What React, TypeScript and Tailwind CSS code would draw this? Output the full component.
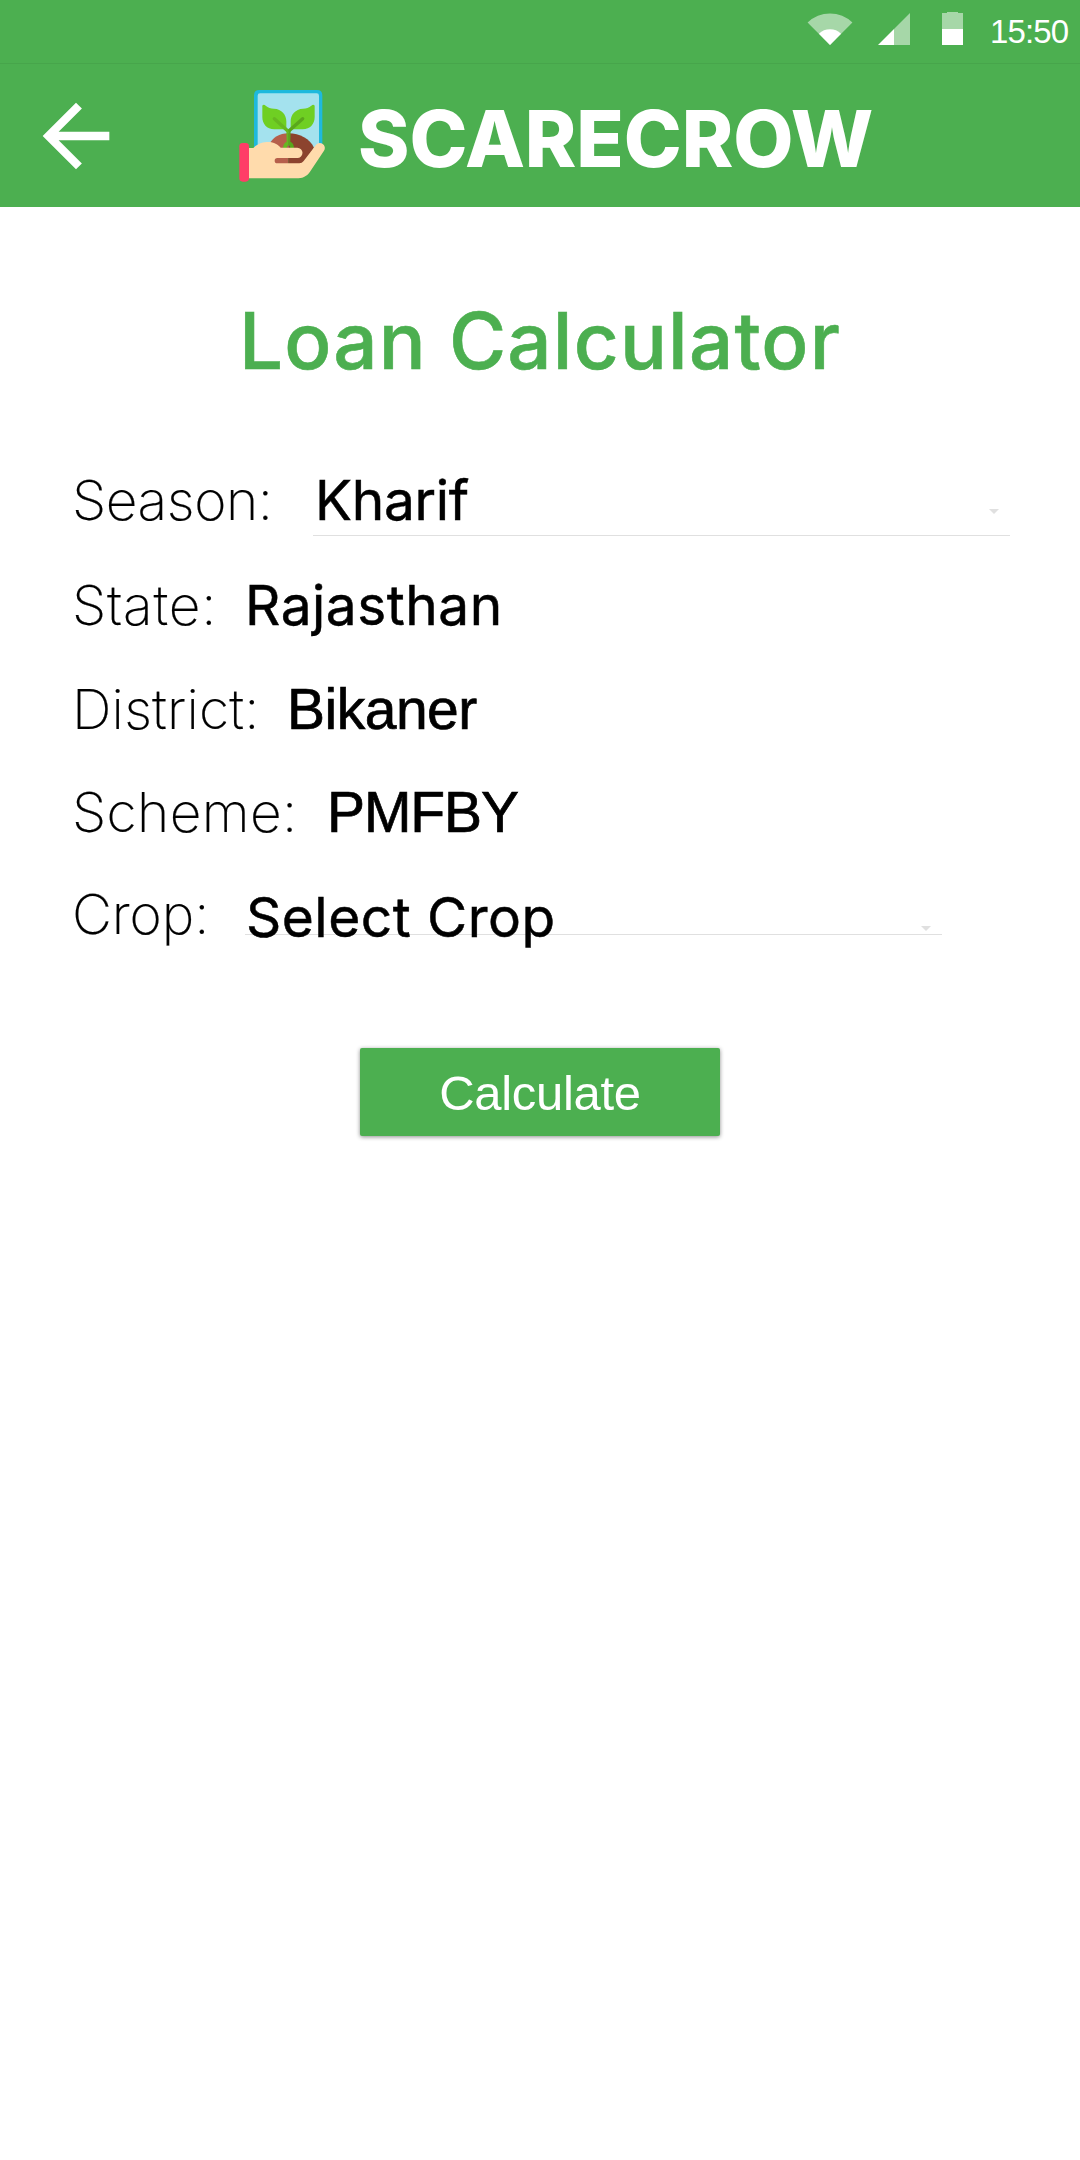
import React from "react";

const INTER = "font-['Inter',sans-serif]";
const LIBERATION = "font-['Liberation_Sans',sans-serif]";

function StatusBar() {
  return (
    <div className="flex h-16 items-start border-b border-[#47a54b] bg-[#4caf50]">
      <svg className="mt-3 ml-[807px] h-[33px] w-[46px]" viewBox="0 0 46 33">
        <path d="M23 33 0.6 10.6A32 32 0 0 1 45.4 10.6Z" fill="#fff" fillOpacity=".5" />
        <path d="M23 33 11.9 21.7A16 16 0 0 1 34.1 21.7Z" fill="#fff" />
      </svg>
      <svg className="mt-[13px] ml-[25px] h-8 w-8" viewBox="0 0 32 32">
        <path d="M16 16 32 0V32H16Z" fill="#fff" fillOpacity=".5" />
        <path d="M0 32 16 16V32Z" fill="#fff" />
      </svg>
      <svg className="mt-3 ml-8 h-[33px] w-[21px]" viewBox="0 0 21 33">
        <path d="M5 0H16V1H21V17H0V1H5Z" fill="#fff" fillOpacity=".5" />
        <path d="M0 17H21V33H0Z" fill="#fff" />
      </svg>
      <span className={`${LIBERATION} mt-3 ml-[27px] text-[33px] leading-[40px] tracking-[-0.9px] whitespace-nowrap text-white`}>15:50</span>
    </div>
  );
}

function Logo() {
  return (
    <svg className="mt-[25px] ml-[112px] h-[94px] w-[88px]" viewBox="714 118 264 282">
      <path d="M762 310V137Q762 121 778 121H951Q967 121 967 137V300H762Z" fill="#1eb9dd" />
      <path d="M773 310V138Q773 131 780 131H950Q957 131 957 138V300H773Z" fill="#a4e2ee" />
      <path d="M865 251C838 251 818 264 808 284L824 345H865Z" fill="#b65f4b" />
      <path d="M865 251C900 251 930 268 942 294L912 345H865Z" fill="#8c432e" />
      <path d="M787 172C786 165 792 163 797 168C804 174 812 177 822 177C845 178 859 195 859 215V239H823C800 239 787 222 787 202Z" fill="#6fcf23" />
      <path d="M944 172C945 165 939 163 934 168C927 174 919 177 909 177C886 178 872 195 872 215V239H908C931 239 944 222 944 202Z" fill="#6fcf23" />
      <path d="M823 207 861 242" stroke="#66b821" strokeWidth="10" strokeLinecap="round" />
      <path d="M908 207 869 242" stroke="#5aa71c" strokeWidth="10" strokeLinecap="round" />
      <path d="M859 239H866V286Q860 288 860 296H849Q849 281 860 276Z" fill="#66b821" />
      <path d="M872 239H865V286Q871 288 871 296H882Q882 281 871 276Z" fill="#5aa71c" />
      <path d="M746 295H760C775 280 790 277 805 277C822 277 834 285 842 294H892A15.500 15.500 0 0 1 892 325H832A8 8 0 0 0 832 341H898Q906 341 911 334L946 288C952 279 962 278 969 284C976 290 976 298 971 305L930 366C920 381 905 386 890 386H746Z" fill="#ffdbac" />
      <rect x="718" y="280" width="29" height="116" rx="10" fill="#ff3d67" />
    </svg>
  );
}

function AppBar() {
  return (
    <header className="flex h-[143px] items-start bg-[#4caf50]">
      <svg className="mt-[22px] ml-[26px] h-[100px] w-[100px]" viewBox="0 0 24 24" fill="#fff">
        <path d="M20 11H7.830l5.590-5.590L12 4l-8 8 8 8 1.410-1.410L7.830 13H20v-2z" />
      </svg>
      <Logo />
      <h1 className={`${INTER} mt-[35px] ml-8 text-[78px] leading-[80px] font-extrabold tracking-[-0.1px] whitespace-nowrap text-white`}>SCARECROW</h1>
    </header>
  );
}

function Caret({ className }: { className: string }) {
  return (
    <svg className={className} viewBox="0 0 10 5">
      <path d="M0 0H10L5 5Z" fill="#e0e0e0" />
    </svg>
  );
}

const row = "flex items-start pl-[72px]";
const label = `${INTER} shrink-0 text-[55px] leading-[60px] font-extralight whitespace-nowrap [-webkit-text-stroke:0.2px_#000]`;
const value = `${INTER} text-[55px] leading-[60px] font-normal whitespace-nowrap [-webkit-text-stroke:0.5px_#000]`;
const plain = `${LIBERATION} text-[57px] leading-[60px] whitespace-nowrap [-webkit-text-stroke:0.7px_#000]`;

export default function App() {
  return (
    <div className="h-[2160px] w-[1080px] bg-white text-black">
      <StatusBar />
      <AppBar />
      <main>
        <h2 className={`${INTER} mt-[94px] text-center text-[78px] leading-[80px] font-medium tracking-[1.2px] text-[#4caf50] [-webkit-text-stroke:0.6px_#4caf50]`}>Loan Calculator</h2>
        <div className={`${row} mt-[89px] h-[105px]`}>
          <span className={`${label} w-[241px] tracking-[-0.4px]`}>Season:</span>
          <div className="flex h-[66px] w-[697px] justify-between border-b border-[#e0e0e0]">
            <span className={`${value} ml-[2px] tracking-[-0.3px]`}>Kharif</span>
            <Caret className="mt-[39px] mr-[11px] h-[5px] w-[10px]" />
          </div>
        </div>
        <div className={`${row} h-[104px]`}>
          <span className={`${label} w-[173px] tracking-[0.8px]`}>State:</span>
          <span className={`${value} tracking-[0.5px]`}>Rajasthan</span>
        </div>
        <div className={`${row} h-[103px]`}>
          <span className={`${label} w-[215px] tracking-[0.2px]`}>District:</span>
          <span className={`${plain} tracking-[-0.5px]`}>Bikaner</span>
        </div>
        <div className={`${row} h-[101px]`}>
          <span className={`${label} w-[255px] tracking-[0.4px]`}>Scheme:</span>
          <span className={`${plain} tracking-[-1.1px]`}>PMFBY</span>
        </div>
        <div className={`${row} h-[165px]`}>
          <span className={`${label} mt-px w-[173px] tracking-[-0.1px]`}>Crop:</span>
          <div className="flex h-[52px] w-[697px] justify-between border-b border-[#e0e0e0]">
            <span className={`${value} mt-1 ml-px tracking-[0.5px]`}>Select Crop</span>
            <Caret className="mt-[43px] mr-[11px] h-[5px] w-[10px]" />
          </div>
        </div>
        <button className={`${LIBERATION} mx-auto block h-[88px] w-[360px] rounded-xs bg-[#4caf50] pt-px text-center text-[49px] leading-[88px] tracking-[-0.3px] text-white shadow-[0_1px_4px_rgba(0,0,0,0.45)]`}>Calculate</button>
      </main>
    </div>
  );
}
